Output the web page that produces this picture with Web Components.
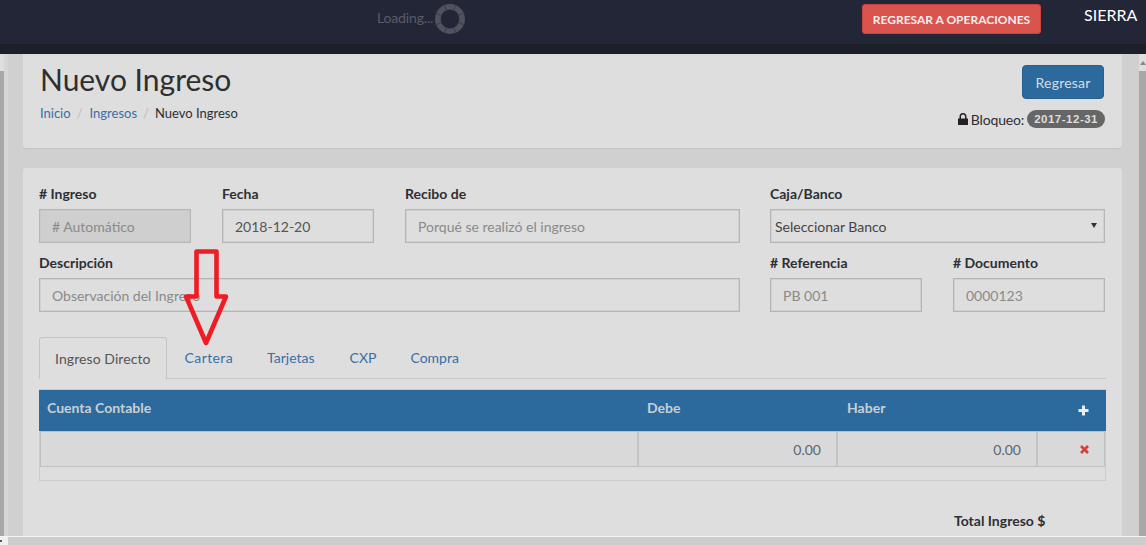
<!DOCTYPE html>
<html><head><meta charset="utf-8">
<style>
html,body{margin:0;padding:0;height:545px;width:1146px;overflow:hidden;background:#d4d4d4;font-family:Lato,"Liberation Sans",sans-serif;}
</style></head><body>
<template id="t-app"><style>
:host{display:grid;grid-template-rows:54px 482px 1px 8px;width:1146px;height:545px;position:relative;overflow:hidden}
.mid{display:grid;grid-template-columns:4px 4px 1fr 7px;min-height:0;overflow:hidden}
.sb{display:grid;grid-template-rows:17px 1fr;background:#a8a8a8}
.sb>div{background:#dedede;position:relative}
.sr>div::after{content:"";position:absolute;left:1px;top:7px;border:3px solid transparent;border-bottom:4px solid #888;border-top:0}
.wl{background:#d6d6d6}
.content{min-width:0;padding:0 17px 0 15px;background:#d0d0d0;overflow:hidden}
.white{background:#f4f4f4}
.foot{display:grid;grid-template-columns:8px 1fr}
.corner{background:#f0f0f0;position:relative}
.corner::after{content:"";position:absolute;left:0;top:3px;width:2px;height:2px;background:#555}
.hbar{background:#cdcdcd}
</style>
<slot name="top"></slot>
<div class="mid"><div class="sb"><div></div></div><div class="wl"></div><div class="content"><slot></slot></div><div class="sb sr"><div></div></div></div>
<div class="white"></div><div class="foot"><div class="corner"></div><div class="hbar"></div></div>
<slot name="over"></slot>
</template>

<template id="t-top"><style>
:host{display:flex;align-items:flex-start;background:linear-gradient(#232636 0,#232636 44px,#1e2029 44px);height:54px;box-sizing:border-box;padding:4px 8px 0 377px}
.load{display:flex;align-items:center;gap:2px;color:#5a5c69;font-size:14px;height:30px;width:485px;letter-spacing:-.15px}
.load span{position:relative;top:-2px}
svg{display:block}
.btn{background:#d9534f;border:1px solid #c94440;border-radius:3px;color:#f4eeee;font-size:12px;font-weight:700;height:30px;width:179px;box-sizing:border-box;display:flex;align-items:center;justify-content:center;white-space:nowrap}
.user{color:#fff;font-size:16px;margin-left:43px;line-height:22px}
</style>
<div class="load"><span>Loading...</span>
<svg width="30" height="30" viewBox="0 0 30 30"><circle cx="15" cy="15" r="12.2" fill="none" stroke="#50525e" stroke-width="5.600"/><g stroke="#3c3f4d" stroke-width="1" transform="rotate(22.5 15 15)"><path d="M15 0V6M15 24V30M0 15H6M24 15H30M4 4L8.500 8.500M21.500 21.500L26 26M26 4L21.500 8.500M8.500 21.500L4 26"/></g></svg></div>
<div class="btn">REGRESAR A OPERACIONES</div><div class="user">SIERRA</div>
</template>

<template id="t-head"><style>
:host{display:flex;justify-content:space-between;background:#dedede;box-sizing:border-box;height:94px;border-radius:0 0 3px 3px;box-shadow:0 1px 1px rgba(0,0,0,.06);padding:0 18px 0 17px}
h1{margin:7px 0 0;font-size:30px;font-weight:400;color:#2d2f33;line-height:36px}
.crumb{font-size:13px;margin-top:8px;line-height:17px;color:#2d2f33;display:flex}
a{color:#3a6ea5}i{font-style:normal;color:#bdbdbd;padding:0 7px 0 6px}
.crumb span{margin-left:-1px}
.r{display:flex;flex-direction:column;align-items:flex-end}
.b{background:#2c699d;border:1px solid #26608f;border-radius:4px;color:#d6dde3;font-size:14px;letter-spacing:.2px;width:82px;height:34px;box-sizing:border-box;display:flex;align-items:center;justify-content:center;margin-top:11px}
.lock{display:flex;align-items:center;font-size:14px;letter-spacing:-.15px;color:#2d2f33;margin:11px -1px 0 0;height:18px}
.lock svg{margin-right:3px}
.badge{background:#666;color:#dedede;font:700 11.500px "Liberation Sans",sans-serif;border-radius:10px;padding:0 7px;height:18px;line-height:18px;margin-left:3px;letter-spacing:.5px}
</style>
<div><h1>Nuevo Ingreso</h1><div class="crumb"><a>Inicio</a><i>/</i><a>Ingresos</a><i>/</i><span>Nuevo Ingreso</span></div></div>
<div class="r"><div class="b">Regresar</div><div class="lock"><svg width="10" height="12" viewBox="0 0 10 12"><path fill="#222" d="M0 5.500h1.500V3.500a3.500 3.500 0 0 1 7 0v2H10V12H0zM3 5.500h4V3.500a2 2 0 0 0-4 0z"/></svg>Bloqueo:<span class="badge">2017-12-31</span></div></div>
</template>

<template id="t-field"><style>
:host{display:block;min-width:0}
label{display:block;font-size:14px;font-weight:700;color:#2d2f33;line-height:17px;margin:-1px 0 7px}
.i{height:34px;box-sizing:border-box;border:1px solid #b5b5b5;box-shadow:inset 0 0 0 .5px #c4c4c4;padding:0 12px;font-size:14px;display:flex;align-items:center;color:#8a8a8a;background:transparent;position:relative}
:host([value]) .i{color:#555}
:host([disabled]) .i{background:#cfcfcf}
:host([select]) .i{padding:0 4px;color:#444}
:host([select]) .i::after{content:"";position:absolute;right:7px;top:13px;border:3.5px solid transparent;border-top:5px solid #333;border-bottom:0}
</style><label></label><div class="i"></div>
</template>

<template id="t-form"><style>
:host{display:block;background:#dedede;box-sizing:border-box;margin-top:20px;border-radius:3px 3px 0 0;padding:18px 17px 0 16px;height:400px;overflow:hidden}
</style>
<slot></slot>
</template>

<template id="t-tabs"><style>
:host{display:flex;height:41px;margin:25px -1px 0 0;border-bottom:1px solid #c9c9c9;font-size:14px;box-sizing:content-box}
.t{padding:0 17px;line-height:42px;color:#3a6ea5;height:42px;box-sizing:border-box;white-space:nowrap}
.t.a{color:#555;border:1px solid #c4c4c4;border-bottom:0;height:42px;border-radius:3px 3px 0 0;padding:0 15px;background:#dedede;line-height:41px;margin-right:1px;letter-spacing:.08px}
.c{letter-spacing:.4px}
.x{padding-left:18px}
</style><div class="t a">Ingreso Directo</div><div class="t c">Cartera</div><div class="t">Tarjetas</div><div class="t x">CXP</div><div class="t">Compra</div>
</template>

<template id="t-table"><style>
:host{display:block;margin:10px -1px 0 0;border:1px solid #cbcbcb;height:92px;box-sizing:border-box;font-size:14px}
.h{display:grid;grid-template-columns:600px 200px 1fr 38px;background:#2c699d;height:41px;color:#c9cfd3;font-weight:700;margin:0 -1px;padding-left:8px;line-height:36px}
.plus{display:flex;align-items:center;padding-left:10px}
.b{display:grid;grid-template-columns:598px 199px 200px 1fr;height:36px;border:1px solid #c0c0c0;background:#d9d9d9;box-sizing:border-box;color:#5b6670}
.b>div{border-right:2px solid #c4c4c4;display:flex;align-items:center;justify-content:flex-end;padding-right:15px}
.b>div:last-child{border:0}
svg{display:block}
</style>
<div class="h"><div>Cuenta Contable</div><div>Debe</div><div>Haber</div><div class="plus"><svg width="11" height="11" viewBox="0 0 11 11"><path fill="#e8eef2" d="M4 .5h3V4h3.500v3H7v3.500H4V7H.5V4H4z"/></svg></div></div>
<div class="b"><div></div><div>0.00</div><div>0.00</div><div><svg width="9" height="9" viewBox="0 0 9 9"><path stroke="#d43f3a" stroke-width="2.600" d="M1 1L8 8M8 1L1 8"/></svg></div></div>
</template>

<script>
function def(n,tid){customElements.define(n,class extends HTMLElement{constructor(){super();this.attachShadow({mode:'open'}).append(document.getElementById(tid).content.cloneNode(true))}})}
def('x-app','t-app');def('x-top','t-top');def('x-head','t-head');def('x-form','t-form');def('x-tabs','t-tabs');def('x-table','t-table');
customElements.define('x-field',class extends HTMLElement{constructor(){super();this.attachShadow({mode:'open'}).append(document.getElementById('t-field').content.cloneNode(true))}
connectedCallback(){const s=this.shadowRoot;s.querySelector('label').textContent=this.getAttribute('label');s.querySelector('.i').textContent=this.getAttribute('value')||this.getAttribute('ph')||''}});
customElements.define('x-grid',class extends HTMLElement{constructor(){super();this.attachShadow({mode:'open'}).innerHTML='<style>:host{display:grid;grid-template-columns:var(--c);column-gap:var(--g,31px);margin-bottom:var(--m,0)}</style><slot></slot>'}});
customElements.define('x-arrow',class extends HTMLElement{constructor(){super();this.attachShadow({mode:'open'}).innerHTML='<style>:host{position:absolute;left:180px;top:245px;width:54px;height:105px}svg{display:block}</style><svg width="54" height="105" viewBox="0 0 54 105"><path d="M16.500 6.500H36.500V51.500H46L26 98L6 51.500H16.500Z" fill="none" stroke="#ee1c25" stroke-width="4.600" stroke-linejoin="round"/></svg>'}});
</script>
<x-app>
<x-top slot="top"></x-top>
<x-head></x-head>
<x-form>
<x-grid style="--c:701px 335px;--g:30px;--m:12px">
<x-grid style="--c:152px 152px 335px;--g:31px;--m:0">
<x-field label="# Ingreso" ph="# Automático" disabled></x-field>
<x-field label="Fecha" value="2018-12-20"></x-field>
<x-field label="Recibo de" ph="Porqué se realizó el ingreso"></x-field>
</x-grid>
<x-field label="Caja/Banco" value="Seleccionar Banco" select></x-field>
</x-grid>
<x-grid style="--c:701px 335px;--g:30px">
<x-field label="Descripción" ph="Observación del Ingreso"></x-field>
<x-grid style="--c:152px 152px;--g:31px;--m:0">
<x-field label="# Referencia" ph="PB 001"></x-field>
<x-field label="# Documento" ph="0000123"></x-field>
</x-grid>
</x-grid>
<x-tabs></x-tabs>
<x-table></x-table>
<div style="margin:31px 0 0 915px;font-size:14px;font-weight:700;color:#2d2f33;line-height:17px;white-space:nowrap">Total Ingreso $</div>
</x-form>
<x-arrow slot="over"></x-arrow>
</x-app>
</body></html>
